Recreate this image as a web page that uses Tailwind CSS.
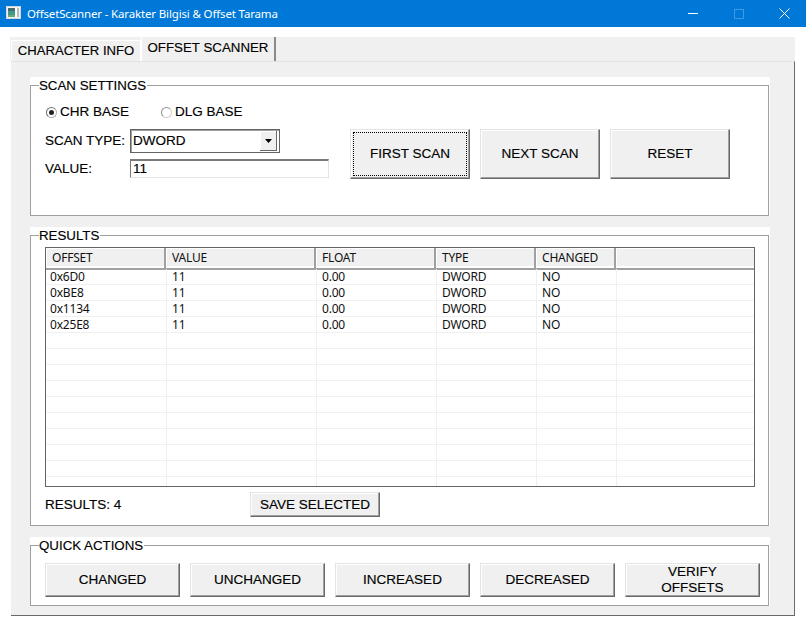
<!DOCTYPE html>
<html lang="en">
<head>
  <meta charset="UTF-8">
  <title>OffsetScanner</title>
  <script src="https://cdn.jsdelivr.net/npm/@tailwindcss/browser@4"></script>
</head>
<body class="bg-white w-[806px] h-[632px] overflow-hidden font-['Liberation_Sans',sans-serif] text-[13.5px] leading-4 text-black [-webkit-text-stroke:0.15px_#000]">
  <!-- title bar -->
  <div class="h-[27px] bg-[#0078d7] flex items-center text-white [-webkit-text-stroke:0]">
    <svg class="ml-[6px] mb-[2px] w-[15px] h-[13px]" viewBox="0 0 15 13">
      <rect width="15" height="13" fill="#d4d8dc"/>
      <rect x="1" y="1" width="13" height="11" fill="#f2f2f2"/>
      <rect x="2" y="2" width="7" height="3" fill="#4a6a72"/>
      <rect x="2" y="5" width="7" height="4" fill="#3f9a8a"/>
      <rect x="2" y="9" width="7" height="2" fill="#6aa878"/>
      <rect x="9" y="2" width="2" height="9" fill="#fff"/>
      <rect x="11" y="2" width="2" height="9" fill="#b8bcc0"/>
    </svg>
    <span class="ml-[6px] font-['Noto_Sans',sans-serif] text-[11.5px] tracking-[-0.15px]">OffsetScanner - Karakter Bilgisi &amp; Offset Tarama</span>
    <div class="ml-auto flex items-center h-full">
      <div class="w-[46px] flex justify-center"><div class="w-[10px] h-px bg-white"></div></div>
      <div class="w-[45px] flex justify-center"><div class="w-[10px] h-[10px] border border-white/25"></div></div>
      <div class="w-[46px] flex justify-center mr-[-1px]">
        <svg class="w-[11px] h-[11px]" viewBox="0 0 11 11" stroke="#fff" fill="none"><path d="M.5 .5l10 10M10.5 .5l-10 10"/></svg>
      </div>
    </div>
  </div>

  <div class="ml-[10px] mt-[10px] w-[785px]">
    <!-- tabs -->
    <div class="h-[24px] bg-[#f0f0f0] flex items-end pl-px text-[13.3px]">
      <div class="w-[130px] h-[21px] border-t border-l border-r border-white text-center pt-[2px] text-[13.1px]">CHARACTER INFO</div>
      <div class="w-[135px] h-[24px] border-r-2 border-r-[#8a8a8a] border-l border-l-white text-center pt-[3px]">OFFSET SCANNER</div>
    </div>
    <!-- tab panel -->
    <div class="ml-px w-[784px] h-[555px] bg-[#f0f0f0] border-t border-t-[#e3e3e3] border-r border-r-[#696969] border-b border-b-[#696969] pl-[19px] pt-[15px]">

      <!-- scan settings -->
      <div class="w-[740px] h-[139px] bg-white">
        <fieldset class="w-[739px] h-[139px] border border-[#a0a0a0] px-[8px]">
          <legend class="h-4 pt-px text-[13.3px] bg-white pr-px">SCAN SETTINGS</legend>
          <div class="flex">
            <div class="w-[311px] pl-[6px]">
              <div class="flex items-center h-4 mt-[11px] ml-px">
                <span class="w-[11px] h-[11px] rounded-full border border-t-[#707070] border-l-[#707070] border-r-[#b0b0b0] border-b-[#b0b0b0] bg-white flex items-center justify-center"><span class="w-[5px] h-[5px] rounded-full bg-[#222]"></span></span>
                <span class="ml-[3px] w-[101px]">CHR BASE</span>
                <span class="w-[11px] h-[11px] rounded-full border border-t-[#909090] border-l-[#909090] border-r-[#d0d0d0] border-b-[#d0d0d0] bg-white"></span>
                <span class="ml-[3px]">DLG BASE</span>
              </div>
              <div class="flex items-center mt-[9px] h-[24px]">
                <span class="w-[85px]">SCAN TYPE:</span>
                <div class="w-[150px] h-[24px] border border-[#646464] shadow-[inset_1px_1px_0_#a0a0a0] flex items-center justify-between pl-[2px] pr-[2px]">
                  <span>DWORD</span>
                  <span class="w-[17px] h-[20px] bg-[#f0f0f0] border-r border-b border-[#696969] shadow-[inset_1px_1px_0_#fff] flex items-center justify-center">
                    <svg class="w-[7px] h-[4px]" viewBox="0 0 7 4"><path d="M0 0h7L3.5 4z" fill="#000"/></svg>
                  </span>
                </div>
              </div>
              <div class="flex items-center mt-[6px] h-[19px]">
                <span class="w-[85px]">VALUE:</span>
                <div class="w-[199px] h-[19px] border-t-2 border-l border-t-[#7a7a7a] border-l-[#7a7a7a] border-r-[#e3e3e3] border-b-[#e3e3e3] border-r border-b pl-[2px] leading-[15px]">11</div>
              </div>
            </div>
            <div class="flex gap-[10px] mt-[36px] h-[50px]">
              <button class="w-[120px] h-[50px] bg-[#f0f0f0] border-t border-l border-[#e3e3e3] border-r-[#696969] border-b-[#696969] border-r border-b shadow-[inset_-1px_-1px_0_#a0a0a0,inset_1px_1px_0_#fff] p-[2px]">
                <span class="flex items-center justify-center h-full border border-dotted border-black">FIRST SCAN</span>
              </button>
              <button class="w-[120px] h-[50px] bg-[#f0f0f0] border-t border-l border-[#e3e3e3] border-r-[#696969] border-b-[#696969] border-r border-b shadow-[inset_-1px_-1px_0_#a0a0a0,inset_1px_1px_0_#fff]">NEXT SCAN</button>
              <button class="w-[120px] h-[50px] bg-[#f0f0f0] border-t border-l border-[#e3e3e3] border-r-[#696969] border-b-[#696969] border-r border-b shadow-[inset_-1px_-1px_0_#a0a0a0,inset_1px_1px_0_#fff]">RESET</button>
            </div>
          </div>
        </fieldset>
      </div>

      <!-- results -->
      <div class="w-[740px] h-[299px] bg-white mt-[11px]">
        <fieldset class="w-[739px] h-[299px] border border-[#a0a0a0] px-[8px]">
          <legend class="h-4 pt-px text-[13.3px] bg-white pr-px">RESULTS</legend>
          <div class="ml-[6px] mt-[4px] w-[710px] h-[240px] border border-[#646464] overflow-hidden font-['Noto_Sans',sans-serif] text-[12px] tracking-[-0.2px] text-[#111] [-webkit-text-stroke:0]">
            <div class="grid grid-cols-[120px_150px_120px_100px_80px_1fr] h-[18px] bg-[#f0f0f0]">
              <div class="pl-[6px] leading-[20px] border-r-2 border-b-2 border-r-[#a0a0a0] border-b-[#a0a0a0] shadow-[inset_1px_1px_0_#fff]">OFFSET</div>
              <div class="pl-[6px] leading-[20px] border-r-2 border-b-2 border-r-[#a0a0a0] border-b-[#a0a0a0] shadow-[inset_1px_1px_0_#fff]">VALUE</div>
              <div class="pl-[6px] leading-[20px] border-r-2 border-b-2 border-r-[#a0a0a0] border-b-[#a0a0a0] shadow-[inset_1px_1px_0_#fff]">FLOAT</div>
              <div class="pl-[6px] leading-[20px] border-r-2 border-b-2 border-r-[#a0a0a0] border-b-[#a0a0a0] shadow-[inset_1px_1px_0_#fff]">TYPE</div>
              <div class="pl-[6px] leading-[20px] border-r-2 border-b-2 border-r-[#a0a0a0] border-b-[#a0a0a0] shadow-[inset_1px_1px_0_#fff]">CHANGED</div>
              <div class="border-b-2 border-b-[#a0a0a0] shadow-[inset_1px_1px_0_#fff]"></div>
            </div>
            <div id="rows" class="mt-[3px]"></div>
          </div>
          <div class="flex items-center mt-[5px] h-[25px] ml-[6px]">
            <span class="w-[205px] mt-[1px]">RESULTS: 4</span>
            <button class="w-[130px] h-[25px] bg-[#f0f0f0] border-t border-l border-[#e3e3e3] border-r-[#696969] border-b-[#696969] border-r border-b shadow-[inset_-1px_-1px_0_#a0a0a0,inset_1px_1px_0_#fff]">SAVE SELECTED</button>
          </div>
        </fieldset>
      </div>

      <!-- quick actions -->
      <div class="w-[740px] h-[69px] bg-white mt-[11px]">
        <fieldset class="w-[739px] h-[69px] border border-[#a0a0a0] px-[8px]">
          <legend class="h-4 pt-px text-[13.3px] bg-white pr-px">QUICK ACTIONS</legend>
          <div class="flex gap-[10px] ml-[6px] mt-[10px]">
            <button class="w-[135px] h-[34px] bg-[#f0f0f0] border-t border-l border-[#e3e3e3] border-r-[#696969] border-b-[#696969] border-r border-b shadow-[inset_-1px_-1px_0_#a0a0a0,inset_1px_1px_0_#fff]">CHANGED</button>
            <button class="w-[135px] h-[34px] bg-[#f0f0f0] border-t border-l border-[#e3e3e3] border-r-[#696969] border-b-[#696969] border-r border-b shadow-[inset_-1px_-1px_0_#a0a0a0,inset_1px_1px_0_#fff]">UNCHANGED</button>
            <button class="w-[135px] h-[34px] bg-[#f0f0f0] border-t border-l border-[#e3e3e3] border-r-[#696969] border-b-[#696969] border-r border-b shadow-[inset_-1px_-1px_0_#a0a0a0,inset_1px_1px_0_#fff]">INCREASED</button>
            <button class="w-[135px] h-[34px] bg-[#f0f0f0] border-t border-l border-[#e3e3e3] border-r-[#696969] border-b-[#696969] border-r border-b shadow-[inset_-1px_-1px_0_#a0a0a0,inset_1px_1px_0_#fff]">DECREASED</button>
            <button class="w-[135px] h-[34px] bg-[#f0f0f0] border-t border-l border-[#e3e3e3] border-r-[#696969] border-b-[#696969] border-r border-b shadow-[inset_-1px_-1px_0_#a0a0a0,inset_1px_1px_0_#fff]">VERIFY<br>OFFSETS</button>
          </div>
        </fieldset>
      </div>
    </div>
  </div>

  <script>
    // list rows, the empty ones only show the grid lines
    const data = [
      ['0x6D0', '11', '0.00', 'DWORD', 'NO'],
      ['0xBE8', '11', '0.00', 'DWORD', 'NO'],
      ['0x1134', '11', '0.00', 'DWORD', 'NO'],
      ['0x25E8', '11', '0.00', 'DWORD', 'NO']
    ];
    let html = '';
    for (let i = 0; i < 14; i++) {
      const r = data[i] || ['', '', '', '', ''];
      html += `<div class='grid grid-cols-[121px_150px_120px_100px_80px_1fr] h-[16px] leading-[16px] border-b border-b-[#f0f0f0]'>` +
        r.map(c => `<div class='pl-[5px] first:pl-[4px] border-r border-r-[#f0f0f0]'>${c}</div>`).join('') +
        `<div></div></div>`;
    }
    document.getElementById('rows').innerHTML = html;
  </script>
</body>
</html>
